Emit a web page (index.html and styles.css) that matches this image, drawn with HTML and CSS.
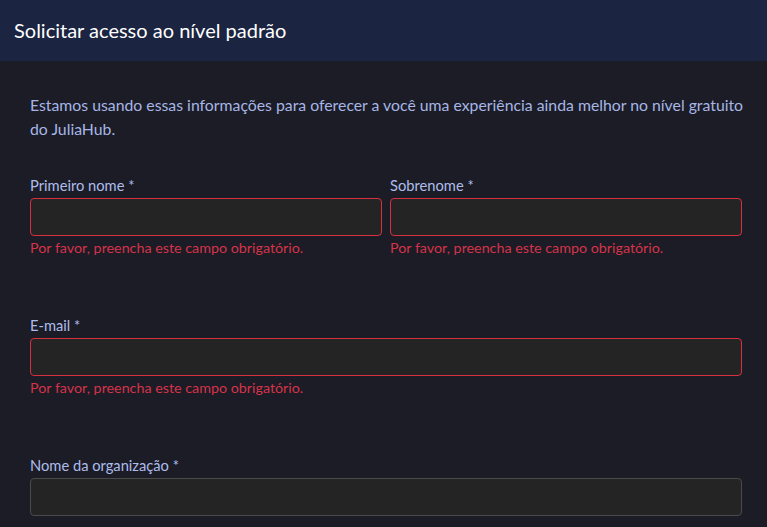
FILE: index.html
```html
<!DOCTYPE html>
<html lang="pt">
<head>
<meta charset="utf-8">
<link rel="stylesheet" href="styles.css">
</head>
<body>
<header class="header"><h1 class="title">Solicitar acesso ao nível padrão</h1></header>
<main class="content">
  <p class="intro">Estamos usando essas informações para oferecer a você uma experiência ainda melhor no nível gratuito do JuliaHub.</p>
  <div class="row">
    <div class="field">
      <label class="label">Primeiro nome *</label>
      <div class="input error"></div>
      <div class="msg">Por favor, preencha este campo obrigatório.</div>
    </div>
    <div class="field">
      <label class="label">Sobrenome *</label>
      <div class="input error"></div>
      <div class="msg">Por favor, preencha este campo obrigatório.</div>
    </div>
  </div>
  <div class="field">
    <label class="label">E-mail *</label>
    <div class="input error"></div>
    <div class="msg">Por favor, preencha este campo obrigatório.</div>
  </div>
  <div class="field last">
    <label class="label">Nome da organização *</label>
    <div class="input"></div>
  </div>
</main>
</body>
</html>
```
FILE: styles.css
```css
html, body { margin: 0; padding: 0; }
body {
  background: #1b1c25;
  font-family: "Lato", sans-serif;
  min-height: 527px;
}
.header {
  background: #1b2440;
  height: 61px;
  display: flex;
  align-items: center;
  padding: 0 14px;
  box-sizing: border-box;
}
.title {
  margin: 0;
  color: #ffffff;
  font-size: 20px;
  font-weight: 400;
  padding-bottom: 2px;
}
.content {
  padding: 32px 25px 0 30px;
}
.intro {
  margin: 0 -20px 0 0;
  color: #a7b6e6;
  font-size: 15.8px;
  line-height: 24px;
}
.row {
  display: flex;
  gap: 8px;
  margin-top: 34px;
  margin-bottom: 57px;
}
.row .field { flex: 1; margin-bottom: 0; }
.field { margin-bottom: 57px; }
.field.last { margin-bottom: 0; }
.label {
  display: block;
  color: #aebcec;
  font-size: 14.7px;
  line-height: 20px;
  margin-bottom: 3px;
}
.input {
  height: 38px;
  box-sizing: border-box;
  background: #242424;
  border: 1px solid #4a4a4a;
  border-radius: 4px;
}
.input.error { border-color: #d6303f; }
.msg {
  color: #d6334a;
  font-size: 14.3px;
  line-height: 20px;
  margin-top: 2px;
}
```
